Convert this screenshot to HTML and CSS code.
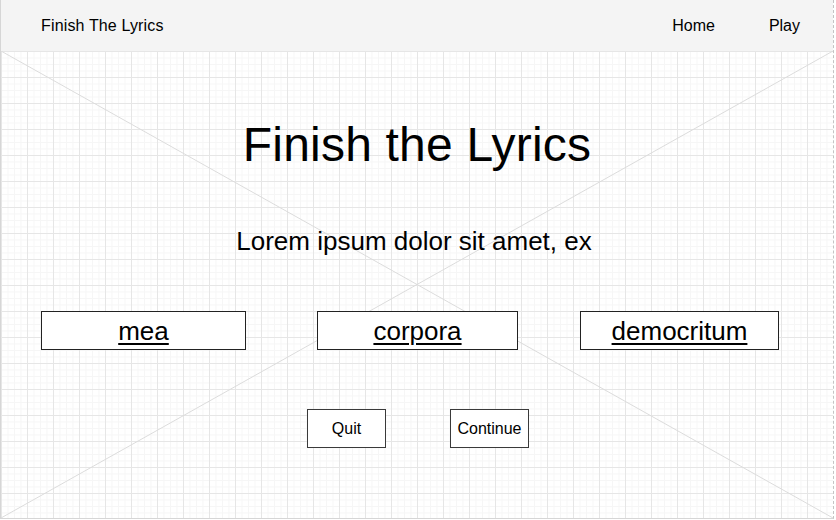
FILE: index.html
```html
<!DOCTYPE html>
<html lang="en">
<head>
<meta charset="utf-8">
<title>Finish The Lyrics</title>
<link rel="stylesheet" href="styles.css">
</head>
<body>
<div class="frame">
  <header class="topbar">
    <div class="brand">Finish The Lyrics</div>
    <nav class="nav">
      <a class="nav-link" href="#">Home</a>
      <a class="nav-link" href="#">Play</a>
    </nav>
  </header>
  <main class="canvas">
    <svg class="placeholder-x" viewBox="0 0 100 100" preserveAspectRatio="none" aria-hidden="true">
      <line x1="0" y1="0" x2="100" y2="100" vector-effect="non-scaling-stroke"/>
      <line x1="100" y1="0" x2="0" y2="100" vector-effect="non-scaling-stroke"/>
    </svg>
    <div class="content">
      <h1 class="title">Finish the Lyrics</h1>
      <p class="lyric">Lorem ipsum dolor sit amet, ex</p>
      <div class="options">
        <a class="option option-1" href="#">mea</a>
        <a class="option option-2" href="#">corpora</a>
        <a class="option option-3" href="#">democritum</a>
      </div>
      <div class="actions">
        <button class="btn" type="button">Quit</button>
        <button class="btn" type="button">Continue</button>
      </div>
    </div>
  </main>
</div>
</body>
</html>
```

FILE: styles.css
```css
* {
  box-sizing: border-box;
}

html, body {
  margin: 0;
  padding: 0;
  background: #ffffff;
}

body {
  font-family: "Liberation Sans", Arial, Helvetica, sans-serif;
  color: #000;
}

.frame {
  width: 834px;
  height: 519px;
  border-left: 1px solid #d6d6d6;
  border-right: 1px dashed #c4c4c4;
  border-bottom: 1px solid #d6d6d6;
  display: flex;
  flex-direction: column;
}

.topbar {
  height: 51px;
  flex: none;
  background: #f4f4f4;
  display: flex;
  align-items: center;
  padding: 0 33px 0 40px;
  font-size: 16px;
}

.brand {
  line-height: 16px;
  letter-spacing: 0.15px;
}

.nav {
  margin-left: auto;
  display: flex;
  gap: 54px;
}

.nav-link {
  color: #000;
  text-decoration: none;
  line-height: 16px;
}

.canvas {
  position: relative;
  flex: 1;
  background-color: #ffffff;
  background-image:
    linear-gradient(to right, #e6e6e6 1px, transparent 1px),
    linear-gradient(to bottom, #e6e6e6 1px, transparent 1px),
    linear-gradient(to right, #f6f6f6 1px, transparent 1px),
    linear-gradient(to bottom, #f6f6f6 1px, transparent 1px);
  background-size: 26px 26px, 26px 26px, 6.5px 6.5px, 6.5px 6.5px;
  background-position: 0 0, 0 0, 0 0, 0 0;
  overflow: hidden;
}

.placeholder-x {
  position: absolute;
  left: 0;
  top: 0;
  width: 100%;
  height: 100%;
  z-index: 0;
}

.placeholder-x line {
  stroke: #dcdcdc;
  stroke-width: 1;
}

.content {
  position: relative;
  z-index: 1;
  display: flex;
  flex-direction: column;
}

.title {
  margin: 70px 0 0 0;
  font-size: 48px;
  line-height: 48px;
  font-weight: normal;
  text-align: center;
  letter-spacing: 0.2px;
}

.lyric {
  margin: 59px 0 0 0;
  font-size: 26px;
  line-height: 26px;
  text-align: center;
  padding-right: 6px;
}

.options {
  margin-top: 57px;
  display: flex;
  padding-left: 40px;
}

.option {
  height: 39px;
  border: 1px solid #222;
  background: #fff;
  color: #000;
  font-size: 26px;
  line-height: 26px;
  display: flex;
  align-items: center;
  justify-content: center;
  text-decoration: underline;
  text-decoration-thickness: 2px;
  text-underline-offset: 3px;
}

.option-1 {
  width: 205px;
}

.option-2 {
  width: 201px;
  margin-left: 71px;
}

.option-3 {
  width: 199px;
  margin-left: 62px;
}

.actions {
  margin-top: 59px;
  display: flex;
  justify-content: center;
  gap: 64px;
  padding-left: 2px;
}

.btn {
  width: 79px;
  height: 39px;
  border: 1px solid #3a3a3a;
  background: #fff;
  color: #000;
  font-family: "Liberation Sans", Arial, Helvetica, sans-serif;
  font-size: 16px;
  line-height: 16px;
  padding: 0;
  display: flex;
  align-items: center;
  justify-content: center;
}
```
